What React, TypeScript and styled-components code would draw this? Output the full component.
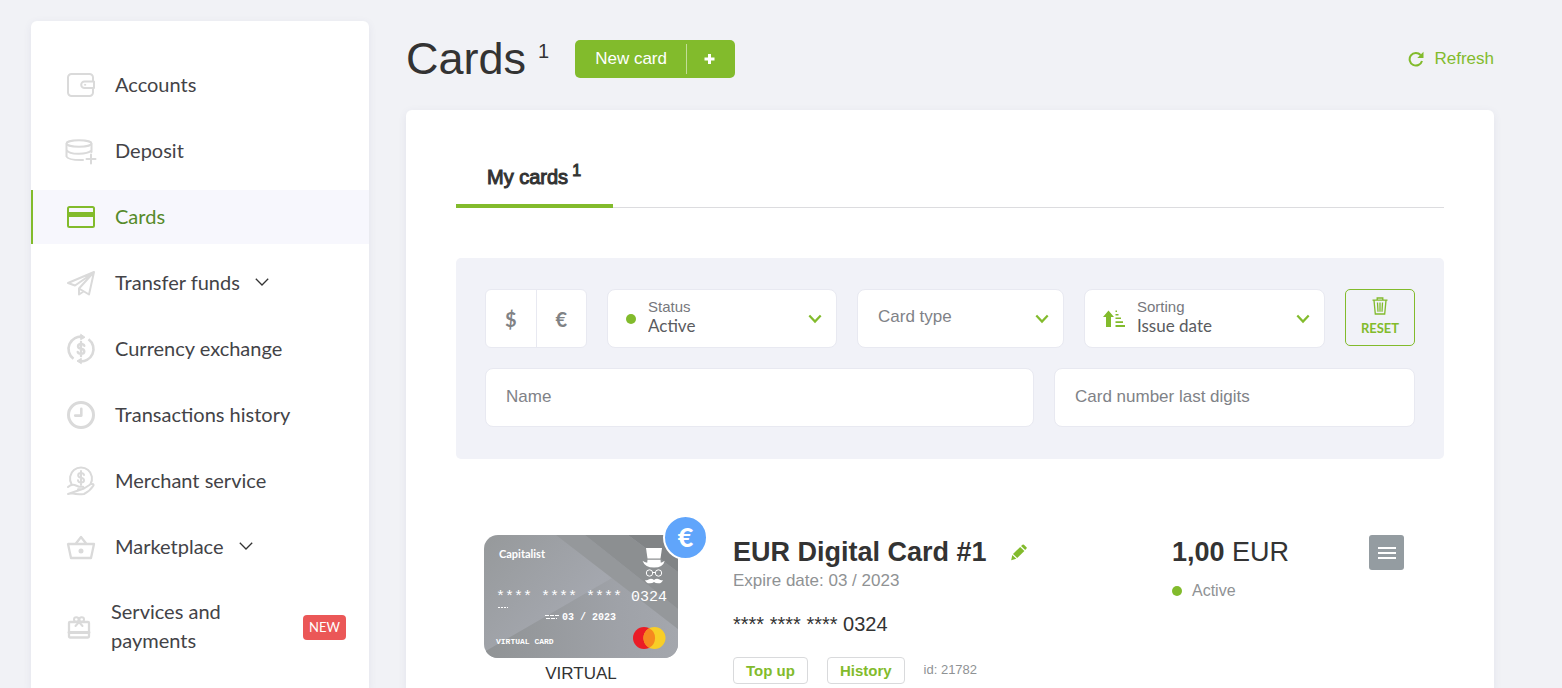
import React from "react";
import styled, { createGlobalStyle } from "styled-components";

const GREEN = "#82bb2c";
const SANS = `"Liberation Sans", Arial, sans-serif`;
const SOFT = `Lato, "Open Sans", sans-serif`;

const GlobalStyle = createGlobalStyle`
  *, *::before, *::after { box-sizing: border-box; }
  body { margin: 0; background: #f1f2f6; color: #333; font-family: ${SANS}; }
  button, input, select { font: inherit; color: inherit; }
  button { cursor: pointer; }
  h1, h2, p { margin: 0; }
  svg { display: block; flex: none; }
`;

const Page = styled.div`
  display: flex;
  gap: 37px;
  min-height: 100vh;
  padding: 0 68px 0 31px;
`;

const Sidebar = styled.nav`
  flex: none;
  width: 338px;
  margin-top: 21px;
  padding: 37px 0 20px;
  display: flex;
  flex-direction: column;
  gap: 12px;
  background: #fff;
  border-radius: 6px 6px 0 0;
  box-shadow: 0 2px 8px rgba(60, 70, 110, 0.08);
`;

const NavItem = styled.a<{ $active?: boolean }>`
  display: flex;
  align-items: center;
  gap: 20px;
  min-height: 54px;
  padding: 11px 23px 11px 34px;
  border-left: 2px solid ${(p) => (p.$active ? GREEN : "transparent")};
  background: ${(p) => (p.$active ? "#f7f7fd" : "none")};
  color: ${(p) => (p.$active ? "#568a2a" : "#434347")};
  font: 400 20px/29px ${SOFT};
  text-decoration: none;
`;

const NavIcon = styled.svg<{ $active?: boolean; $small?: boolean }>`
  width: ${(p) => (p.$small ? 24 : 28)}px;
  height: 28px;
  overflow: visible;
  fill: none;
  stroke: ${(p) => (p.$active ? GREEN : "#dadada")};
  color: ${(p) => (p.$active ? GREEN : "#dadada")};
  stroke-width: 2;
  stroke-linecap: round;
  stroke-linejoin: round;
`;

const NavText = styled.span<{ $grow?: boolean }>`
  flex: ${(p) => (p.$grow ? "1" : "none")};
  display: flex;
  align-items: center;
  gap: 15px;
  padding-bottom: 2px;
`;

const NewBadge = styled.span`
  padding: 0 6px;
  border-radius: 4px;
  background: #eb5757;
  color: #fff;
  font: 400 13px/25px ${SOFT};
`;

const Main = styled.main`
  flex: 1;
  min-width: 0;
  display: flex;
  flex-direction: column;
`;

const Header = styled.header`
  display: flex;
  align-items: center;
  height: 110px;
  padding: 32px 0 24px;
`;

const Title = styled.h1`
  display: flex;
  gap: 12px;
  margin-right: 26px;
  font-size: 45px;
  font-weight: 400;
  line-height: 54px;
`;

const TitleCount = styled.span`
  font-size: 20px;
  line-height: 38px;
`;

const NewCardButton = styled.button`
  display: flex;
  align-items: center;
  height: 38px;
  padding: 0;
  border: 0;
  border-radius: 5px;
  background: ${GREEN};
  color: #fff;
  font-size: 17px;
  line-height: 30px;
`;

const NewCardLabel = styled.span`
  padding: 0 19px 0 20px;
  border-right: 1px solid #c3dd98;
`;

const PlusIcon = styled.svg`
  width: 48px;
  height: 12px;
  stroke: #fff;
  stroke-width: 3;
`;

const RefreshLink = styled.a`
  display: flex;
  align-items: center;
  gap: 10px;
  margin-left: auto;
  color: ${GREEN};
  font-size: 17px;
  text-decoration: none;
`;

const Panel = styled.section`
  flex: 1;
  padding: 40px 50px 4px;
  background: #fff;
  border-radius: 6px 6px 0 0;
  box-shadow: 0 2px 8px rgba(60, 70, 110, 0.08);
`;

const Tabs = styled.div`
  display: flex;
  box-shadow: inset 0 -1px 0 #dcdcdf;
`;

const Tab = styled.button`
  display: flex;
  gap: 4px;
  height: 58px;
  padding: 0 32px 0 31px;
  border: 0;
  border-bottom: 4px solid ${GREEN};
  background: none;
  font-size: 20px;
  line-height: 54px;
  -webkit-text-stroke: 1px #333;
`;

const TabCount = styled.span`
  font-size: 16px;
  line-height: 42px;
`;

const Filters = styled.form`
  display: flex;
  flex-direction: column;
  gap: 20px;
  margin-top: 50px;
  padding: 31px 29px 32px;
  border-radius: 5px;
  background: #f1f2f8;
`;

const FilterRow = styled.div<{ $columns: string }>`
  display: grid;
  grid-template-columns: ${(p) => p.$columns};
  gap: 20px;
`;

const CurrencyGroup = styled.div`
  display: flex;
  height: 59px;
  border: 1px solid #e8e9f1;
  border-radius: 6px;
  background: #fff;
`;

const CurrencyButton = styled.button`
  flex: 1;
  padding: 0;
  border: 0;
  background: none;
  color: #808285;
  font: 700 20px/24px ${SOFT};
  & + & {
    border-left: 1px solid #e8e9f1;
  }
`;

const SelectBox = styled.label<{ $pad: number }>`
  display: flex;
  align-items: center;
  min-width: 0;
  height: 59px;
  padding: 0 14px 0 ${(p) => p.$pad}px;
  border: 1px solid #e8e9f1;
  border-radius: 8px;
  background: #fff;
`;

const SelectBody = styled.span`
  flex: 1;
  min-width: 0;
  display: flex;
  flex-direction: column;
  padding-bottom: 3px;
`;

const SelectCaption = styled.span`
  color: #77787d;
  font-size: 15px;
  line-height: 18px;
`;

const Select = styled.select<{ $value?: boolean }>`
  appearance: none;
  width: 100%;
  height: 20px;
  padding: 0;
  border: 0;
  background: none;
  color: ${(p) => (p.$value ? "#5a5b60" : "#808287")};
  font: 400 17px/20px ${(p) => (p.$value ? SOFT : SANS)};
`;

const Dot = styled.span`
  flex: none;
  display: block;
  width: 10px;
  height: 10px;
  border-radius: 50%;
  background: ${GREEN};
`;

const LeadSlot = styled.span`
  flex: none;
  margin-right: 12px;
`;

const ResetButton = styled.button`
  display: flex;
  flex-direction: column;
  align-items: center;
  gap: 5px;
  height: 57px;
  padding: 7px 0 0;
  border: 1px solid ${GREEN};
  border-radius: 5px;
  background: none;
  color: ${GREEN};
  font: 700 13px/16px ${SOFT};
`;

const TextField = styled.input`
  min-width: 0;
  height: 59px;
  padding: 0 20px 1px;
  border: 1px solid #e8e9f1;
  border-radius: 8px;
  background: #fff;
  font-size: 17px;
  &::placeholder {
    color: #808287;
    opacity: 1;
  }
`;

const CardRow = styled.article`
  display: flex;
  align-items: flex-start;
  margin-top: 76px;
  padding: 0 40px 0 28px;
`;

const CardFigure = styled.figure`
  position: relative;
  flex: none;
  width: 194px;
  margin: 0 55px 0 0;
`;

const CardCaption = styled.figcaption`
  margin-top: 4px;
  font-size: 17px;
  line-height: 24px;
  text-align: center;
`;

const CurrencyBadge = styled.span`
  position: absolute;
  top: -20px;
  right: -30px;
  width: 45px;
  height: 45px;
  border: 2px solid #fff;
  border-radius: 50%;
  background: #60a5fb;
  color: #fff;
  font: 900 27px/40px ${SOFT};
  text-align: center;
`;

const CardDetails = styled.div`
  flex: 1;
  min-width: 0;
`;

const CardHeading = styled.div`
  display: flex;
  align-items: center;
  gap: 24px;
`;

const CardName = styled.h2`
  font-size: 27px;
  line-height: 34px;
`;

const IconButton = styled.button`
  padding: 0;
  border: 0;
  background: none;
`;

const Expiry = styled.p`
  color: #8f9294;
  font-size: 17px;
  line-height: 24px;
`;

const CardNumber = styled.p`
  margin-top: 17px;
  font-size: 20px;
  line-height: 28px;
`;

const Actions = styled.div`
  display: flex;
  align-items: center;
  gap: 19px;
  margin-top: 19px;
`;

const ActionButton = styled.button`
  height: 27px;
  padding: 0 12px;
  border: 1px solid #d9dadc;
  border-radius: 4px;
  background: #fff;
  color: ${GREEN};
  font-size: 15px;
  font-weight: 700;
  line-height: 25px;
`;

const CardId = styled.span`
  padding-bottom: 2px;
  color: #8f9294;
  font-size: 13px;
`;

const Balance = styled.div`
  flex: none;
  width: 197px;
`;

const Amount = styled.p`
  font-size: 27px;
  line-height: 34px;
`;

const CardState = styled.p`
  display: flex;
  align-items: center;
  gap: 10px;
  margin-top: 10px;
  color: #8f9294;
  font-size: 16px;
  line-height: 24px;
`;

const MenuButton = styled.button`
  flex: none;
  display: grid;
  place-items: center;
  width: 35px;
  height: 35px;
  padding: 0;
  border: 0;
  border-radius: 3px;
  background: #949ca1;
`;

const Chevron = () => (
  <svg width="14" height="10" viewBox="0 0 14 10" fill="none" stroke={GREEN} strokeWidth="2.2">
    <path d="M1.300 1.500 7 7.600 12.700 1.500" />
  </svg>
);

const NavChevron = () => (
  <svg width="14" height="8" viewBox="0 0 14 8" fill="none" stroke="#333" strokeWidth="1.300">
    <path d="M.8.8 7 7 13.200.8" />
  </svg>
);

const RefreshIcon = () => (
  <svg width="16" height="16" viewBox="0 0 16 16" fill="none" stroke={GREEN} strokeWidth="2">
    <path d="M12.600 4A6.300 6.300 0 1 0 14 10" />
    <path d="M15.500.8V7H9.300z" fill={GREEN} stroke="none" />
  </svg>
);

const SortIcon = () => (
  <svg width="22" height="18" viewBox="0 0 22 18" fill={GREEN}>
    <path d="M5.500.5 11 7H8v10H3V7H0z" />
    <path d="M12.500.5h1.500V2h-1.500zM12.500 4h3v1.500h-3zM12.500 7.500h5.500V9h-5.500zM12.500 11.200h7.500V13h-7.500zM12.500 15h9.500v2h-9.500z" />
  </svg>
);

const TrashIcon = () => (
  <svg width="16" height="18" viewBox="0 0 16 18" fill="none" stroke={GREEN} strokeWidth="1.300">
    <path d="M.5 3.200h15M5.200 3V1h5.600v2M2 3.400 3.300 17h9.400L14 3.400M5.500 5.500l.5 9.200M8 5.500v9.200M10.500 5.500l-.5 9.200" />
  </svg>
);

const PencilIcon = () => (
  <svg width="16" height="17" viewBox="0 0 16 17" fill={GREEN}>
    <path d="M9.200 2.900 13.400 7 6.200 14 2 9.900z" />
    <path d="M10 2.100 11.500.7q.7-.6 1.400 0L15.500 3.200q.6.700 0 1.400L14.200 6.100zM1.300 10.900 5.300 14.800 .2 16.300z" />
  </svg>
);

const CardArt = () => (
  <svg width="194" height="123" viewBox="0 0 194 123" role="img" aria-label="Capitalist virtual card">
    <defs>
      <clipPath id="cardShape">
        <rect width="194" height="123" rx="14" />
      </clipPath>
      <linearGradient id="cardBase" x1="0" y1="0" x2="1" y2="0.6">
        <stop offset="0" stopColor="#96999b" />
        <stop offset="0.6" stopColor="#a4a7ae" />
        <stop offset="1" stopColor="#9ea1a7" />
      </linearGradient>
      <linearGradient id="cardLower" x1="0" y1="0" x2="1" y2="0">
        <stop offset="0" stopColor="#909395" />
        <stop offset="0.7" stopColor="#9fa2a8" />
        <stop offset="1" stopColor="#a4a7ad" />
      </linearGradient>
    </defs>
    <g clipPath="url(#cardShape)">
      <rect width="194" height="123" fill="url(#cardBase)" />
      <path d="M0 117 128 43 194 94V123H0z" fill="url(#cardLower)" />
      <path d="M72 0H101L194 74V94z" fill="#95989b" />
      <path d="M101 0H144L194 37V74z" fill="#8c8f91" />
      <path d="M144 0H194V37z" fill="#818486" />
    </g>
    <g fill="#fff">
      <text x="15" y="23" fontFamily="Lato, sans-serif" fontSize="11" fontWeight="700">Capitalist</text>
      <g fontFamily="'Liberation Mono', monospace">
        <text x="12" y="66" fontSize="15">**** **** **** 0324</text>
        <text x="78" y="85" fontSize="10" fontWeight="700">03 / 2023</text>
        <text x="12" y="109" fontSize="8" fontWeight="700">VIRTUAL CARD</text>
      </g>
      <path d="M162 13h16l-1.500 10.500h-13z" />
      <path d="M163.500 24.700h13l.3 3q2-.6 3.900-2-1.500 6.800-10.700 6.800T158.500 25.700q2 1.400 4.700 2z" />
      <path d="M170 45q2.500-2 5-.8 2 1.800 4 .8-1.500 3.700-5 3.300-2.500 0-4-1.200-1.500 1.200-4 1.200-3.500.4-5-3.300 2 1 4-.8 2.500-1.200 5 .8z" />
    </g>
    <g fill="none" stroke="#fff">
      <circle cx="165.500" cy="38" r="3.200" />
      <circle cx="174.500" cy="38" r="3.200" />
      <path d="M168.500 37.500h3" />
      <path d="M14 72.500h10" strokeDasharray="2 1" />
      <path d="M61 80.500h14M62 83.500h11" strokeDasharray="4 1" />
    </g>
    <circle cx="160" cy="103" r="11" fill="#eb1c26" />
    <circle cx="170.500" cy="103" r="11" fill="#f8ce27" />
    <path d="M165.250 93.300a11 11 0 0 1 0 19.400 11 11 0 0 1 0-19.400z" fill="#f6881f" />
  </svg>
);

export default function App() {
  return (
    <>
      <GlobalStyle />
      <Page>
        <Sidebar aria-label="Main">
          <NavItem href="#accounts">
            <NavIcon viewBox="0 0 28 28">
              <path d="M26 10V6.500a3.500 3.500 0 0 0-3.500-3.500h-18A3.500 3.500 0 0 0 1 6.500v15A3.500 3.500 0 0 0 4.500 25h18a3.500 3.500 0 0 0 3.500-3.500V17M27 10.500H17.500a3.300 3.300 0 0 0 0 6.600H27z" />
              <circle cx="18" cy="13.800" r=".6" strokeWidth="1" />
            </NavIcon>
            <NavText>Accounts</NavText>
          </NavItem>
          <NavItem href="#deposit">
            <NavIcon viewBox="0 0 28 28">
              <ellipse cx="12" cy="6.500" rx="12.500" ry="3.200" />
              <path d="M-.5 7v12.500q1.500 3.800 16.500 3.500M24.500 7v8M-.5 13q2.500 4 12.500 3.800 9 0 12.500-3.200M24 17.500v9M19.500 22h9" />
            </NavIcon>
            <NavText>Deposit</NavText>
          </NavItem>
          <NavItem href="#cards" $active aria-current="page">
            <NavIcon viewBox="0 0 28 28" $active>
              <rect x="1" y="4" width="26" height="20" rx="1.500" />
              <path d="M1 9.500h26v4H1z" fill="currentColor" strokeWidth="1" />
            </NavIcon>
            <NavText>Cards</NavText>
          </NavItem>
          <NavItem href="#transfer">
            <NavIcon viewBox="0 0 28 28">
              <path d="M8 16.500 1 14 27 3 22 25.500 12 19.500M8 16.500 24 5.500M27 3 12 19.500V25.500L16.500 22.500" />
            </NavIcon>
            <NavText>
              Transfer funds
              <NavChevron />
            </NavText>
          </NavItem>
          <NavItem href="#exchange">
            <NavIcon viewBox="0 0 28 28">
              <path d="M16 1.800A12.300 12.300 0 0 0 6.500 23.800M12 26.200A12.300 12.300 0 0 0 21.500 4.200" strokeLinecap="butt" strokeWidth="2.600" />
              <path d="M14 -.5 18 2.300 14 4.500zM14 23.500l-4 2.500 4 2.500z" fill="currentColor" strokeWidth="1" />
              <path d="M17.300 10.800q-.5-1.800-3.300-1.800-3 0-3 2.300 0 2 3 2.500 3.300.6 3.300 2.700 0 2.400-3.300 2.400-3 0-3.300-2M14 7v14" strokeWidth="2.400" />
            </NavIcon>
            <NavText>Currency exchange</NavText>
          </NavItem>
          <NavItem href="#history">
            <NavIcon viewBox="0 0 28 28">
              <circle cx="14" cy="14" r="12.500" strokeWidth="3" />
              <path d="M14.300 7.800v6.800H8.200" strokeWidth="2.600" />
            </NavIcon>
            <NavText>Transactions history</NavText>
          </NavItem>
          <NavItem href="#merchant">
            <NavIcon viewBox="0 0 28 28">
              <path d="M4.500 17A11 11 0 1 1 23.500 17" />
              <path d="M17 8q-.5-2-3-2-2.800 0-2.800 2.200 0 2 2.800 2.500 3 .6 3 2.600 0 2.200-3 2.200-2.700 0-3-2.200M14 4v14" />
              <path d="M1 20q4-3.500 8-1.500l3 1.200h4q1.500 1.800-1 2.600H11M17 21.500l7-4.500q3-.5 2.500 1.500-3.500 5.500-9.500 8.500-7 .8-12-.8L1 27z" />
            </NavIcon>
            <NavText>Merchant service</NavText>
          </NavItem>
          <NavItem href="#marketplace">
            <NavIcon viewBox="0 0 28 28">
              <path d="M1 11h26L24 25H4zM8.500 11 14 4l5.500 7" strokeWidth="2.300" />
              <circle cx="14" cy="18" r="1.500" fill="currentColor" />
            </NavIcon>
            <NavText>
              Marketplace
              <NavChevron />
            </NavText>
          </NavItem>
          <NavItem href="#services">
            <NavIcon viewBox="0 0 24 28" $small>
              <rect x="2" y="9" width="20" height="15.500" rx="1" strokeWidth="2.300" />
              <path d="M2 19.500h20" strokeWidth="2.800" />
              <path d="M12 9 8.500 13M12 9l3.500 4" />
              <circle cx="9.300" cy="6.500" r="2.300" />
              <circle cx="14.700" cy="6.500" r="2.300" />
            </NavIcon>
            <NavText $grow>Services and payments</NavText>
            <NewBadge>NEW</NewBadge>
          </NavItem>
        </Sidebar>

        <Main>
          <Header>
            <Title>
              Cards <TitleCount>1</TitleCount>
            </Title>
            <NewCardButton type="button">
              <NewCardLabel>New card</NewCardLabel>
              <PlusIcon viewBox="0 0 48 12">
                <path d="M22.500 1v10M17.500 6h10" />
              </PlusIcon>
            </NewCardButton>
            <RefreshLink href="#refresh">
              <RefreshIcon />
              Refresh
            </RefreshLink>
          </Header>

          <Panel>
            <Tabs role="tablist">
              <Tab type="button" role="tab" aria-selected="true">
                My cards <TabCount>1</TabCount>
              </Tab>
            </Tabs>

            <Filters>
              <FilterRow $columns="102px 230fr 207fr 241fr 70px">
                <CurrencyGroup role="group" aria-label="Currency">
                  <CurrencyButton type="button">$</CurrencyButton>
                  <CurrencyButton type="button">€</CurrencyButton>
                </CurrencyGroup>
                <SelectBox $pad={18}>
                  <LeadSlot>
                    <Dot />
                  </LeadSlot>
                  <SelectBody>
                    <SelectCaption>Status</SelectCaption>
                    <Select $value defaultValue="Active">
                      <option>Active</option>
                    </Select>
                  </SelectBody>
                  <Chevron />
                </SelectBox>
                <SelectBox $pad={20}>
                  <SelectBody>
                    <Select aria-label="Card type" defaultValue="Card type">
                      <option>Card type</option>
                    </Select>
                  </SelectBody>
                  <Chevron />
                </SelectBox>
                <SelectBox $pad={18}>
                  <LeadSlot>
                    <SortIcon />
                  </LeadSlot>
                  <SelectBody>
                    <SelectCaption>Sorting</SelectCaption>
                    <Select $value defaultValue="Issue date">
                      <option>Issue date</option>
                    </Select>
                  </SelectBody>
                  <Chevron />
                </SelectBox>
                <ResetButton type="reset">
                  <TrashIcon />
                  RESET
                </ResetButton>
              </FilterRow>
              <FilterRow $columns="549fr 361fr">
                <TextField type="text" placeholder="Name" aria-label="Name" />
                <TextField
                  type="text"
                  placeholder="Card number last digits"
                  aria-label="Card number last digits"
                />
              </FilterRow>
            </Filters>

            <CardRow>
              <CardFigure>
                <CardArt />
                <CurrencyBadge>€</CurrencyBadge>
                <CardCaption>VIRTUAL</CardCaption>
              </CardFigure>
              <CardDetails>
                <CardHeading>
                  <CardName>EUR Digital Card #1</CardName>
                  <IconButton type="button" aria-label="Rename card">
                    <PencilIcon />
                  </IconButton>
                </CardHeading>
                <Expiry>Expire date: 03 / 2023</Expiry>
                <CardNumber>**** **** **** 0324</CardNumber>
                <Actions>
                  <ActionButton type="button">Top up</ActionButton>
                  <ActionButton type="button">History</ActionButton>
                  <CardId>id: 21782</CardId>
                </Actions>
              </CardDetails>
              <Balance>
                <Amount>
                  <strong>1,00</strong> EUR
                </Amount>
                <CardState>
                  <Dot />
                  Active
                </CardState>
              </Balance>
              <MenuButton type="button" aria-label="Card menu">
                <svg width="18" height="14" viewBox="0 0 18 14" stroke="#fff" strokeWidth="2">
                  <path d="M0 2h18M0 7h18M0 12h18" />
                </svg>
              </MenuButton>
            </CardRow>
          </Panel>
        </Main>
      </Page>
    </>
  );
}
